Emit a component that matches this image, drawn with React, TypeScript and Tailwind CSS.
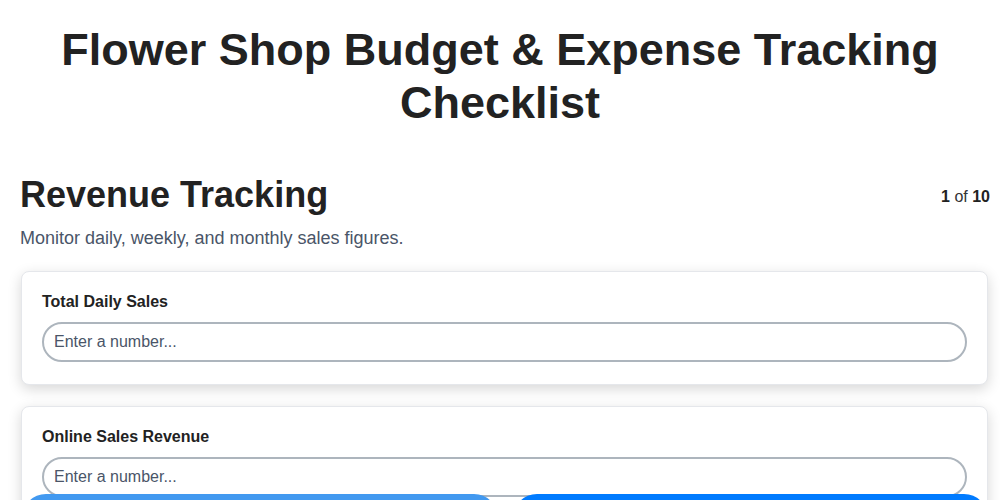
import React from 'react';

const font = { fontFamily: '"Liberation Sans", Arial, sans-serif' };

function NumberField({ label }: { label: string }) {
  return (
    <div className="mb-[21px] rounded-lg border border-[#e5e7eb] bg-white px-5 pt-[18px] pb-[22px] shadow-[0_4px_14px_rgba(0,0,0,0.16)]">
      <label className="block text-base font-bold leading-6 text-[#222]">{label}</label>
      <input
        type="text"
        placeholder="Enter a number..."
        className="mt-[8px] block h-10 w-full rounded-full border-2 border-[#adb5bd] bg-white px-[10px] text-base text-[#333] outline-none placeholder:text-[#4a5568]"
      />
    </div>
  );
}

export default function App() {
  return (
    <div className="min-h-screen bg-white text-[#222]" style={font}>
      <h1 className="pt-6 text-center text-[45px] font-bold leading-[1.17] text-[#222]">
        Flower Shop Budget &amp; Expense Tracking
        <br />
        Checklist
      </h1>

      <main className="pl-5 pr-3 pt-[44px] pb-24">
        <div className="flex items-center justify-between">
          <h2 className="text-[36px] font-bold leading-[1.2] text-[#222]">Revenue Tracking</h2>
          <div className="mt-1 mr-[-2px] text-base text-[#333]">
            <b className="text-[#222]">1</b> of <b className="text-[#222]">10</b>
          </div>
        </div>
        <p className="mt-[9px] text-lg leading-[27px] text-[#4a5568]">
          Monitor daily, weekly, and monthly sales figures.
        </p>

        <div className="mt-[19px] pl-px">
          <NumberField label="Total Daily Sales" />
          <NumberField label="Online Sales Revenue" />
          <NumberField label="Walk-in Sales Revenue" />
        </div>
      </main>

      <div className="fixed inset-x-0 top-[494px] flex gap-[15px] pl-[22px] pr-3">
        <button className="h-12 flex-1 rounded-full bg-[#4299f0] text-base font-bold text-white">
          Previous
        </button>
        <button className="h-12 flex-1 rounded-full bg-[#007bff] text-base font-bold text-white">
          Next
        </button>
      </div>
    </div>
  );
}
